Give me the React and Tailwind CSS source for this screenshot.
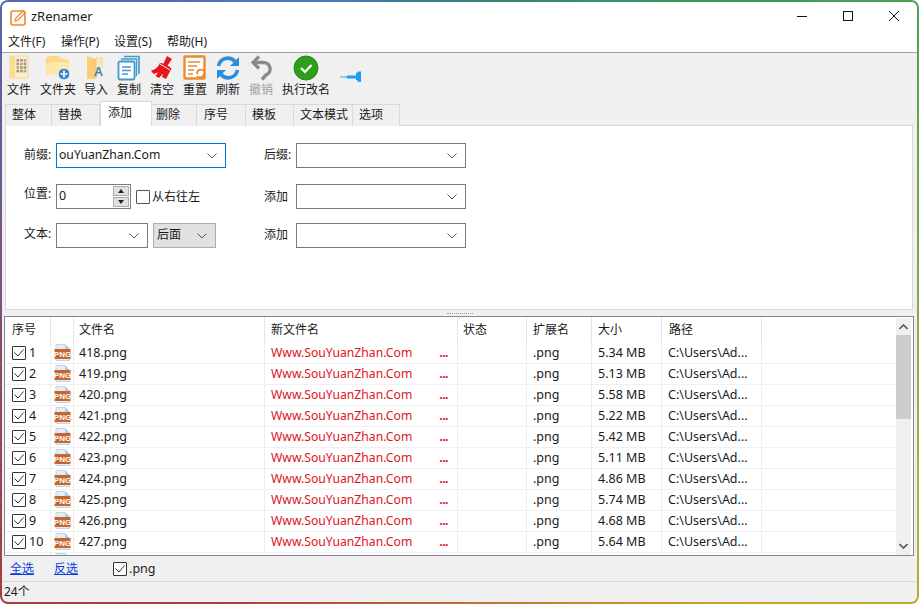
import React from 'react';

const FONT = '"Noto Sans", "Noto Sans CJK SC", sans-serif';

const MENUS = ['文件(F)', '操作(P)', '设置(S)', '帮助(H)'];
const TABS = [
  ['整体', 'w-[47px] pl-[6px]'],
  ['替换', 'w-[48px] pl-[6px]'],
  ['添加', 'w-[52px] pl-[7px]'],
  ['删除', 'w-[45px] pl-[4px]'],
  ['序号', 'w-[49px] pl-[7px]'],
  ['模板', 'w-[48px] pl-[6px]'],
  ['文本模式', 'w-[59px] pl-[6px]'],
  ['选项', 'w-[47px] pl-[6px]'],
];
const ROWS = [
  ['418.png', '5.34 MB'],
  ['419.png', '5.13 MB'],
  ['420.png', '5.58 MB'],
  ['421.png', '5.22 MB'],
  ['422.png', '5.42 MB'],
  ['423.png', '5.11 MB'],
  ['424.png', '4.86 MB'],
  ['425.png', '5.74 MB'],
  ['426.png', '4.68 MB'],
  ['427.png', '5.64 MB'],
];
const COLS = 'grid grid-cols-[46px_23px_191px_193px_69px_65px_70px_100px]';

const Chevron = ({ className = '' }) => (
  <svg width="10" height="6" viewBox="0 0 10 6" className={className}>
    <path d="M0.5 0.5 L5 5 L9.5 0.5" fill="none" stroke="#555" strokeWidth="1" />
  </svg>
);

const Check = ({ checked = true, className = '' }) => (
  <span className={`w-[14px] h-[14px] border border-[#333] rounded-[1px] bg-white flex items-center justify-center shrink-0 ${className}`}>
    {checked && (
      <svg width="12" height="12" viewBox="0 0 12 12">
        <path d="M1.5 5.5 L5 9 L10.5 2.5" fill="none" stroke="#333" strokeWidth="1" />
      </svg>
    )}
  </span>
);

const Combo = ({ width, value, active, gray }) => (
  <div
    className={`${width} h-[25px] border flex items-center justify-between pl-[2px] pr-[8px] text-[12.2px] shrink-0 ${
      active ? 'border-[#0078d7] bg-white' : gray ? 'border-[#adadad] bg-[#e1e1e1]' : 'border-[#7a7a7a] bg-white'
    }`}
  >
    <span>{value}</span>
    <Chevron />
  </div>
);

const FileIcon = () => (
  <svg width="24" height="26" viewBox="0 0 24 26">
    <path d="M3 1 H21 V23 H3 Z" fill="#fdeec4" stroke="#efd9a0" />
    <path d="M3 1 H8 V23 H3 Z" fill="#fbdc92" />
    {[0, 1, 2, 3].map((r) =>
      [0, 1, 2].map((c) => (
        <rect key={`${r}${c}`} x={9.5 + c * 3.6} y={4 + r * 3.6} width="2.6" height="2.6" fill={(r + c) % 3 === 0 ? '#d08070' : (r + c) % 3 === 1 ? '#8a9aaa' : '#b0a890'} />
      ))
    )}
  </svg>
);

const FolderIcon = () => (
  <svg width="26" height="26" viewBox="0 0 26 26">
    <path d="M1 5 Q1 1 5 1 H12 Q15 1 16 4 H20 Q24 4 24 8 V20 H3 Q1 20 1 18 Z" fill="#fbd97e" />
    <path d="M1 9 Q12 5 24 8 V20 H3 Q1 20 1 18 Z" fill="#fde7a8" />
    <circle cx="19" cy="19" r="6" fill="#3f86c8" stroke="#fff" />
    <path d="M15.5 19 H22.5 M19 15.5 V22.5" stroke="#fff" strokeWidth="1.6" />
  </svg>
);

const ImportIcon = () => (
  <svg width="22" height="26" viewBox="0 0 22 26">
    <path d="M2 1 L11 4 V24 H2 Z" fill="#f8cf72" />
    <path d="M11 3 H17 V12 L11 23 Z" fill="#fde9b4" stroke="#e8c878" strokeWidth="0.6" />
    <text x="9" y="21" fontSize="13" fontWeight="600" fill="#3f86b8" fontFamily="Noto Sans, sans-serif">A</text>
  </svg>
);

const CopyIcon = () => (
  <svg width="24" height="26" viewBox="0 0 24 26">
    <path d="M7 1.5 H22 V19" fill="none" stroke="#3f9ad0" strokeWidth="1.6" />
    <path d="M4 4 H19.5 V21" fill="none" stroke="#3f9ad0" strokeWidth="1.4" />
    <rect x="1.5" y="6.5" width="16" height="18" rx="1.5" fill="#fff" stroke="#3f9ad0" strokeWidth="1.8" />
    <path d="M5 12 H14 M5 15.5 H14 M5 19 H11" stroke="#3f9ad0" strokeWidth="1.5" />
  </svg>
);

const BroomIcon = () => (
  <svg width="24" height="26" viewBox="0 0 24 26">
    <path d="M17 1 L22 4 L17.5 10.5 L21.5 13.5 L16 24 L12 22 L13 18.5 L9 23 L5.5 21 L8 17.5 L3.5 19 L1 15.5 Q7 14.5 10 8 L13.5 8.5 Z" fill="#e8141c" />
    <path d="M10 9 L20 15" stroke="#fff" strokeWidth="0.9" />
  </svg>
);

const ResetIcon = () => (
  <svg width="24" height="26" viewBox="0 0 24 26">
    <rect x="1.5" y="1.5" width="20" height="22" rx="1" fill="#fff" stroke="#ee8a2c" strokeWidth="2.4" />
    <path d="M5 7 H17 M5 11 H14 M5 15 H11 M5 19 H10" stroke="#ee8a2c" strokeWidth="1.6" />
    <path d="M14 19 A4 4 0 0 1 21 16 M21 18 A4 4 0 0 1 14 21" fill="none" stroke="#ee8a2c" strokeWidth="1.8" />
  </svg>
);

const RefreshIcon = () => (
  <svg width="24" height="26" viewBox="0 0 24 26">
    <path d="M2.5 11 A9.5 9.5 0 0 1 19 6.5" fill="none" stroke="#2a8ee0" strokeWidth="3.6" />
    <path d="M23 2 V11 H14 Z" fill="#2a8ee0" />
    <path d="M21.5 15 A9.5 9.5 0 0 1 5 19.5" fill="none" stroke="#2a8ee0" strokeWidth="3.6" />
    <path d="M1 24 V15 H10 Z" fill="#2a8ee0" />
  </svg>
);

const UndoIcon = () => (
  <svg width="22" height="26" viewBox="0 0 22 26">
    <path d="M9 1.5 L3 7.5 L9 13.5" fill="none" stroke="#8a8a8a" strokeWidth="3.2" />
    <path d="M3 7.5 H13 A6.5 6.5 0 0 1 16 20 L12 24.5" fill="none" stroke="#8a8a8a" strokeWidth="3.4" />
  </svg>
);

const RunIcon = () => (
  <svg width="26" height="26" viewBox="0 0 26 26">
    <circle cx="13" cy="13" r="12" fill="#2f9e1c" stroke="#258a14" />
    <path d="M8 13 L12 17 L18.5 10" fill="none" stroke="#fff" strokeWidth="2.2" />
  </svg>
);

const PinIcon = () => (
  <svg width="22" height="12" viewBox="0 0 22 12">
    <path d="M0 6 H8" stroke="#38a8f0" strokeWidth="1" />
    <path d="M7 4.5 H16 V2 H17 L18 0.5 H21 V11 H18 L17 9 H16 V7.5 H7 Z" fill="#1ea0f2" />
  </svg>
);

const TOOLS = [
  ['文件', 'w-[34px]', <FileIcon />],
  ['文件夹', 'w-[44px]', <FolderIcon />],
  ['导入', 'w-[32px]', <ImportIcon />],
  ['复制', 'w-[34px]', <CopyIcon />],
  ['清空', 'w-[32px]', <BroomIcon />],
  ['重置', 'w-[34px]', <ResetIcon />],
  ['刷新', 'w-[32px]', <RefreshIcon />],
  ['撤销', 'w-[34px]', <UndoIcon />],
  ['执行改名', 'w-[56px]', <RunIcon />],
];

const PngIcon = ({ label = true }) => (
  <svg width="17" height="17" viewBox="0 0 17 17">
    <path d="M2 0.5 H11 L15.5 5 V16.5 H2 Z" fill="#e6eef5" stroke="#c5d3de" />
    <path d="M11 0.5 V5 H15.5 Z" fill="#a8cce8" />
    <rect x="0.5" y="5" width="16" height="10" fill="#c4662e" />
    {label && (
      <text x="8.5" y="13" textAnchor="middle" fontSize="8" fontWeight="700" fill="#fff" fontFamily="Liberation Sans, sans-serif">PNG</text>
    )}
  </svg>
);

export default function App() {
  return (
    <div
      className="w-[919px] h-[604px] overflow-hidden rounded-[8px] p-[2px] text-[#1a1a1a] bg-[conic-gradient(from_0deg,#3a7f80,#3c9a58_45deg,#a8b040_110deg,#c8a828_135deg,#b04040_215deg,#a83c3c_235deg,#5a62a8_300deg,#4a78c8_330deg,#3a7f80)]"
      style={{ fontFamily: FONT }}
    >
      <div className="w-full h-full bg-[#f0f0f0] rounded-[6px] overflow-hidden flex flex-col">
        {/* title bar */}
        <div className="h-[30px] bg-white flex items-center shrink-0">
          <svg width="17" height="17" viewBox="0 0 17 17" className="ml-[8px]">
            <rect x="1" y="2" width="14" height="14" rx="2" fill="none" stroke="#ee8a2c" strokeWidth="1.6" />
            <path d="M5 12 L6 9 L13 2 L15 4 L8 11 Z" fill="#fff" stroke="#ee8a2c" strokeWidth="1.3" />
          </svg>
          <span className="ml-[4px] text-[13px]">zRenamer</span>
          <div className="ml-auto flex items-center">
            <svg width="46" height="30" viewBox="0 0 46 30"><path d="M18 14.5 H28" stroke="#111" /></svg>
            <svg width="46" height="30" viewBox="0 0 46 30"><rect x="18.5" y="9.5" width="9" height="9" fill="none" stroke="#111" /></svg>
            <svg width="46" height="30" viewBox="0 0 46 30"><path d="M18 9 L28 19 M28 9 L18 19" stroke="#111" /></svg>
          </div>
        </div>

        {/* menu */}
        <div className="h-[21px] bg-white border-b border-[#a0a0a0] flex items-center pl-[6px] gap-[14px] text-[12px] shrink-0">
          {MENUS.map((m) => (
            <span key={m} className="min-w-[39px] whitespace-nowrap">{m}</span>
          ))}
        </div>

        {/* toolbar */}
        <div className="h-[48px] flex items-start shrink-0 pt-[1px] text-[12px]">
          {TOOLS.map(([label, width, icon]) => (
            <div key={label} className={`${width} flex flex-col items-center shrink-0`}>
              <div className="h-[27px] flex items-center justify-center">{icon}</div>
              <span className={`whitespace-nowrap leading-[16px] mt-[1px] ${label === '撤销' ? 'text-[#a0a0a0]' : ''}`}>{label}</span>
            </div>
          ))}
          <div className="w-[34px] h-[46px] flex items-center justify-center">
            <PinIcon />
          </div>
        </div>

        {/* tabs */}
        <div className="h-[25px] flex items-end pl-[3px] shrink-0 text-[12px] relative z-10">
          {TABS.map(([t, w]) =>
            t === '添加' ? (
              <div key={t} className={`${w} h-[25px] bg-white border border-b-0 border-[#d9d9d9] flex items-center pb-[2px]`}>
                {t}
              </div>
            ) : (
              <div key={t} className={`${w} h-[22px] bg-[#f0f0f0] border border-l-0 first:border-l border-b-0 border-[#d9d9d9] flex items-center pb-[1px]`}>
                {t}
              </div>
            )
          )}
        </div>

        {/* form panel */}
        <div className="h-[185px] ml-[3px] mr-[4px] -mt-px bg-white border border-[#d9d9d9] shrink-0 pt-[17px] pl-[18px] text-[12px] flex gap-[32px]">
          <div className="w-[208px] flex flex-col">
            <div className="flex items-center h-[25px]">
              <span className="w-[32px] shrink-0 pb-[2px]">前缀:</span>
              <Combo width="w-[170px]" value="ouYuanZhan.Com" active />
            </div>
            <div className="flex items-center h-[25px] mt-[16px]">
              <span className="w-[32px] shrink-0 pb-[6px]">位置:</span>
              <div className="w-[75px] h-[25px] border border-[#7a7a7a] bg-white flex items-center justify-between pl-[2px] pr-[1px] text-[12.5px] shrink-0">
                <span>0</span>
                <div className="flex flex-col gap-[1px]">
                  <div className="w-[16px] h-[10px] bg-[#e1e1e1] border border-[#adadad] flex items-center justify-center">
                    <svg width="6" height="4" viewBox="0 0 6 4"><path d="M3 0 L6 4 H0 Z" fill="#222" /></svg>
                  </div>
                  <div className="w-[16px] h-[10px] bg-[#e1e1e1] border border-[#adadad] flex items-center justify-center">
                    <svg width="6" height="4" viewBox="0 0 6 4"><path d="M0 0 H6 L3 4 Z" fill="#222" /></svg>
                  </div>
                </div>
              </div>
              <Check checked={false} className="ml-[5px] !border-[#555]" />
              <span className="ml-[2px] whitespace-nowrap">从右往左</span>
            </div>
            <div className="flex items-center h-[25px] mt-[14px]">
              <span className="w-[32px] shrink-0 pb-[3px]">文本:</span>
              <Combo width="w-[92px]" value="" />
              <div className="ml-[5px]">
                <Combo width="w-[63px]" value={<span className="text-[12px] pl-px">后面</span>} gray />
              </div>
            </div>
          </div>
          <div className="w-[210px] flex flex-col">
            <div className="flex items-center h-[25px]">
              <span className="w-[32px] shrink-0 pb-[2px]">后缀:</span>
              <Combo width="w-[170px]" value="" />
            </div>
            <div className="flex items-center h-[25px] mt-[16px]">
              <span className="w-[32px] shrink-0">添加</span>
              <Combo width="w-[170px]" value="" />
            </div>
            <div className="flex items-center h-[25px] mt-[14px]">
              <span className="w-[32px] shrink-0 pb-[2px]">添加</span>
              <Combo width="w-[170px]" value="" />
            </div>
          </div>
        </div>

        {/* splitter */}
        <div className="h-[6px] flex items-center justify-center shrink-0">
          <div className="w-[26px] h-[1px] border-t border-dotted border-[#999]"></div>
        </div>

        {/* file list */}
        <div className="h-[240px] ml-[2px] mr-[3px] border border-[#828790] bg-white flex overflow-hidden shrink-0">
          <div className="flex-1 min-w-0">
            <div className={`${COLS} h-[25px] text-[12px] items-center`}>
              {['序号', '', '文件名', '新文件名', '状态', '扩展名', '大小', '路径'].map((h, i) => (
                <div key={i} className={`h-full border-r border-[#e5e5e5] flex items-center ${i === 0 || i === 7 ? 'pl-[7px]' : i === 2 || i === 4 ? 'pl-[5px]' : 'pl-[6px]'}`}>{h}</div>
              ))}
            </div>
            {ROWS.map(([name, size], i) => (
              <div key={name} className={`${COLS} h-[21px] text-[12.5px] border-b border-[#f0f0f0] -mb-px box-content`}>
                <div className="border-r border-[#eeeeee] pl-[7px] flex items-center gap-[3px]">
                  <Check />
                  <span className="pt-px">{i + 1}</span>
                </div>
                <div className="border-r border-[#eeeeee] flex items-center justify-center"><PngIcon /></div>
                <div className="border-r border-[#eeeeee] pl-[5px] pt-px flex items-center">{name}</div>
                <div className="border-r border-[#eeeeee] pl-[6px] pr-[9px] pt-px flex items-center justify-between text-[#e0141c] whitespace-nowrap text-[12.2px]">
                  <span>Www.SouYuanZhan.Com</span>
                  <span className="font-bold tracking-[-0.5px]">...</span>
                </div>
                <div className="border-r border-[#eeeeee]"></div>
                <div className="border-r border-[#eeeeee] pl-[6px] pt-px flex items-center">.png</div>
                <div className="border-r border-[#eeeeee] pl-[6px] pt-px flex items-center">{size}</div>
                <div className="border-r border-[#eeeeee] pl-[6px] pt-px flex items-center whitespace-nowrap">C:\Users\Ad...</div>
              </div>
            ))}
            {/* next row just peeks in under the last one */}
            <div className={`${COLS} h-[21px]`}>
              <div className="border-r border-[#eeeeee]"></div>
              <div className="border-r border-[#eeeeee] flex items-start justify-center pt-[1px]"><PngIcon label={false} /></div>
              <div className="border-r border-[#eeeeee]"></div>
              <div className="border-r border-[#eeeeee]"></div>
              <div className="border-r border-[#eeeeee]"></div>
              <div className="border-r border-[#eeeeee]"></div>
              <div className="border-r border-[#eeeeee]"></div>
              <div className="border-r border-[#eeeeee]"></div>
            </div>
          </div>
          <div className="w-[15px] mr-[2px] bg-[#f0f0f0] flex flex-col shrink-0 mt-[1px]">
            <div className="h-[17px] flex items-center justify-center">
              <svg width="9" height="6" viewBox="0 0 9 6"><path d="M0.5 5 L4.5 1 L8.5 5" fill="none" stroke="#555" strokeWidth="1.6" /></svg>
            </div>
            <div className="h-[84px] bg-[#cdcdcd]"></div>
            <div className="flex-1"></div>
            <div className="h-[17px] flex items-center justify-center mb-[1px]">
              <svg width="9" height="6" viewBox="0 0 9 6"><path d="M0.5 1 L4.5 5 L8.5 1" fill="none" stroke="#555" strokeWidth="1.6" /></svg>
            </div>
          </div>
        </div>

        {/* select bar */}
        <div className="h-[24px] flex items-center text-[12px] pl-[8px] pt-px shrink-0 border-b border-[#d9d9d9] box-content">
          <span className="text-[#0a3cdc] underline whitespace-nowrap">全选</span>
          <span className="text-[#0a3cdc] underline whitespace-nowrap ml-[20px]">反选</span>
          <Check className="ml-[35px]" />
          <span className="ml-[2px] text-[12.5px]">.png</span>
        </div>

        {/* status */}
        <div className="flex-1 flex items-center pl-[2px] text-[12px]">24个</div>
      </div>
    </div>
  );
}
